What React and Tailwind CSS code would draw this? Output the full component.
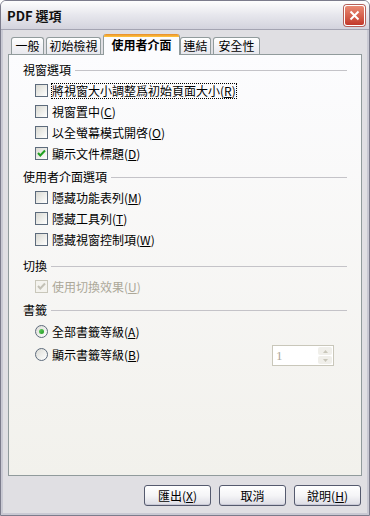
import React from "react";

// XP silver-theme "PDF 選項" dialog, user-interface tab.

function Mn({ k }) {
  return (
    <>
      (<span className="underline underline-offset-[1px]">{k}</span>)
    </>
  );
}

function CheckBox({ checked, disabled }) {
  return (
    <span
      className={
        "w-[13px] h-[13px] shrink-0 border flex items-center justify-center " +
        (disabled
          ? "border-[#c9c7ba] bg-[#f4f3ee]"
          : "border-[#5d6b7c] bg-gradient-to-br from-[#d9d9d2] to-white")
      }
    >
      {checked && (
        <svg width="9" height="9" viewBox="0 0 9 9">
          <path
            d="M1 4 L3.3 6.5 L8 1.5"
            fill="none"
            stroke={disabled ? "#c3c1b6" : "#21a121"}
            strokeWidth="2"
          />
        </svg>
      )}
    </span>
  );
}

function Radio({ checked }) {
  return (
    <span className="w-[13px] h-[13px] shrink-0 rounded-full border border-[#5d6b7c] bg-gradient-to-br from-[#dcdcd6] to-white flex items-center justify-center">
      {checked && (
        <span className="w-[5px] h-[5px] rounded-full bg-gradient-to-br from-[#63cf63] to-[#1c9a1c]" />
      )}
    </span>
  );
}

function Section({ label, children, className = "" }) {
  return (
    <div className={className}>
      <div className="h-[20px] flex items-center">
        <span>{label}</span>
        <span className="flex-1 h-px bg-[#c4c3c8] ml-[4px]" />
      </div>
      {children}
    </div>
  );
}

function CheckRow({ checked, disabled, focus, children }) {
  return (
    <div className="h-[21px] flex items-center pl-[12px] gap-[3px]">
      <CheckBox checked={checked} disabled={disabled} />
      <span
        className={
          "border px-0 leading-[14px] " +
          (focus ? "border-dotted border-black" : "border-transparent") +
          (disabled ? " text-[#aca899]" : "")
        }
      >
        {children}
      </span>
    </div>
  );
}

function Tab({ children, selected, className = "" }) {
  if (selected) {
    return (
      <div
        className={
          "relative z-10 -mb-px h-[21px] flex flex-col border-x border-[#919b9c] rounded-t-[3px] bg-[#fcfcfe] " +
          className
        }
      >
        <div className="h-[3px] rounded-t-[2px] bg-gradient-to-b from-[#e68b2c] to-[#ffc73c]" />
        <div className="flex-1 flex items-center justify-center font-bold pb-[2px]">{children}</div>
      </div>
    );
  }
  return (
    <div
      className={
        "h-[17px] border border-b-0 border-[#919b9c] rounded-t-[3px] bg-gradient-to-b from-white to-[#e8e8ee] flex items-center justify-center " +
        className
      }
    >
      {children}
    </div>
  );
}

function XpButton({ children }) {
  return (
    <button className="w-[67px] h-[21px] rounded-[3px] border border-[#555a6e] bg-gradient-to-b from-white via-[#f5f5f7] to-[#dcdce4] shadow-[inset_0_-1px_0_#c9c9d6] flex items-center justify-center text-[12px] leading-none">
      {children}
    </button>
  );
}

export default function App() {
  return (
    <div className="w-[370px] h-[516px] flex flex-col border border-[#7c7c8c] rounded-t-[6px] overflow-hidden bg-[#e0dfe3] text-black text-[12px] leading-none font-['Noto_Sans_CJK_TC','Noto_Sans',sans-serif]">
      {/* title bar */}
      <div className="h-[29px] shrink-0 flex items-center justify-between pl-[6px] pr-[4px] bg-gradient-to-b from-[#fefefe] via-[#e7e7ed] to-[#d3d3dd] border-b border-[#a4a4b2]">
        <span className="font-bold text-[13px] text-[#111]">PDF 選項</span>
        <span className="w-[21px] h-[21px] rounded-[3px] border border-white bg-gradient-to-b from-[#e98a74] to-[#c2372a] shadow-[0_0_0_1px_#b4605a] flex items-center justify-center">
          <svg width="11" height="11" viewBox="0 0 11 11">
            <path d="M1.5 1.5 L9.5 9.5 M9.5 1.5 L1.5 9.5" stroke="white" strokeWidth="2" />
          </svg>
        </span>
      </div>

      <div className="flex-1 flex flex-col border-x-2 border-b-2 border-[#c9c9d3] px-[5px]">
        {/* tabs */}
        <div className="mt-[4px] h-[20px] flex items-end pl-[3px]">
          <Tab className="w-[33px]">一般</Tab>
          <Tab className="w-[55px] ml-[2px]">初始檢視</Tab>
          <Tab selected className="w-[77px] ml-[2px]">
            使用者介面
          </Tab>
          <Tab className="w-[31px]">連結</Tab>
          <Tab className="w-[47px] ml-[2px]">安全性</Tab>
        </div>

        {/* panel */}
        <div className="h-[422px] border border-[#919b9c] bg-gradient-to-b from-[#fcfcfe] to-[#f2f1ec] pt-[5px] px-[14px]">
          <Section label="視窗選項">
            <CheckRow focus>
              將視窗大小調整爲初始頁面大小<Mn k="R" />
            </CheckRow>
            <CheckRow>
              視窗置中<Mn k="C" />
            </CheckRow>
            <CheckRow>
              以全螢幕模式開啓<Mn k="O" />
            </CheckRow>
            <CheckRow checked>
              顯示文件標題<Mn k="D" />
            </CheckRow>
          </Section>

          <Section label="使用者介面選項" className="mt-[3px]">
            <CheckRow>
              隱藏功能表列<Mn k="M" />
            </CheckRow>
            <CheckRow>
              隱藏工具列<Mn k="T" />
            </CheckRow>
            <CheckRow>
              隱藏視窗控制項<Mn k="W" />
            </CheckRow>
          </Section>

          <Section label="切換" className="mt-[6px]">
            <CheckRow checked disabled>
              使用切換效果<Mn k="U" />
            </CheckRow>
          </Section>

          <Section label="書籤" className="mt-[3px]">
            <div className="h-[23px] flex items-center pl-[12px] gap-[4px]">
              <Radio checked />
              <span>
                全部書籤等級<Mn k="A" />
              </span>
            </div>
            <div className="h-[23px] flex items-center pl-[12px] gap-[4px]">
              <Radio />
              <span className="flex-1">
                顯示書籤等級<Mn k="B" />
              </span>
              <div className="w-[62px] h-[21px] mr-[13px] mt-[2px] border border-[#c9c7ba] bg-white flex items-center justify-between pl-[3px] pr-px">
                <span className="text-[#aca899] font-['Liberation_Serif',serif] text-[13px]">1</span>
                <div className="w-[14px] h-[17px] flex flex-col gap-px">
                  <div className="flex-1 rounded-[2px] bg-[#f0efea] flex items-center justify-center">
                    <svg width="5" height="3" viewBox="0 0 5 3">
                      <path d="M0 3 L2.5 0 L5 3 Z" fill="#c9c7ba" />
                    </svg>
                  </div>
                  <div className="flex-1 rounded-[2px] bg-[#f0efea] flex items-center justify-center">
                    <svg width="5" height="3" viewBox="0 0 5 3">
                      <path d="M0 0 L2.5 3 L5 0 Z" fill="#c9c7ba" />
                    </svg>
                  </div>
                </div>
              </div>
            </div>
          </Section>
        </div>

        {/* buttons */}
        <div className="mt-[9px] flex justify-end gap-[8px] mr-[1px]">
          <XpButton>
            匯出<Mn k="X" />
          </XpButton>
          <XpButton>取消</XpButton>
          <XpButton>
            說明<Mn k="H" />
          </XpButton>
        </div>
      </div>
    </div>
  );
}
